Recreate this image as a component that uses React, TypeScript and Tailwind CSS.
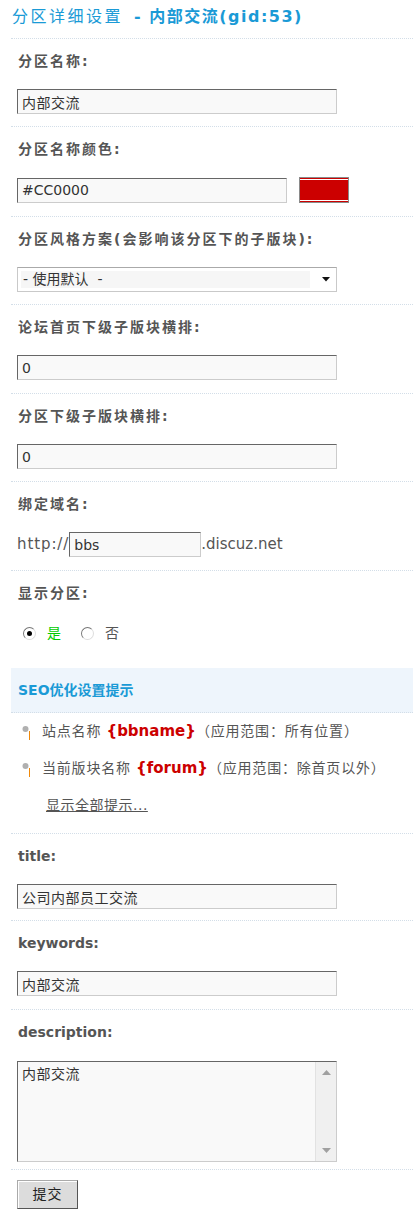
import React from "react";

const inputCls =
  "block h-[25px] border border-t-[#666] border-l-[#666] border-b-[#ccc] border-r-[#ccc] bg-[#f9f9f9] px-[4px] text-[14px] text-[#333] outline-none";

const Label = ({ children, latin = false }: { children: React.ReactNode; latin?: boolean }) => (
  <div
    className={`h-[44px] flex items-center pl-[7px] text-[14px] font-bold text-[#555] ${
      latin ? "tracking-normal" : "tracking-[2px]"
    }`}
  >
    {children}
  </div>
);

const Field = ({
  label,
  latin,
  children,
  bottom = "pb-[12px]",
  top = "mt-[6px]",
}: {
  label: React.ReactNode;
  latin?: boolean;
  children: React.ReactNode;
  bottom?: string;
  top?: string;
}) => (
  <div className={`border-t border-dotted border-[#d3dee8] ${bottom}`}>
    <Label latin={latin}>{label}</Label>
    <div className={`${top} pl-[6px]`}>{children}</div>
  </div>
);

const Radio = ({ checked }: { checked?: boolean }) => (
  <span className="w-[13px] h-[13px] rounded-full border border-t-[#777] border-l-[#777] border-b-[#ddd] border-r-[#ddd] bg-white flex items-center justify-center">
    {checked && <span className="w-[5px] h-[5px] rounded-full bg-black" />}
  </span>
);

const Bullet = () => (
  <svg width="10" height="20" viewBox="0 0 10 20" className="shrink-0">
    <circle cx="3.5" cy="7" r="3" fill="#b0b0b0" />
    <line x1="7.5" y1="9" x2="7.5" y2="18" stroke="#f0890a" strokeWidth="1" />
  </svg>
);

export default function App() {
  return (
    <div className="w-[413px] min-h-[1211px] bg-white pl-[11px] font-['DejaVu_Sans','Noto_Sans_CJK_SC',sans-serif] text-[#555]">
      {/* header */}
      <div className="h-[38px] flex items-center pb-[4px] pl-[1px] text-[16px] text-[#1a9ad6]">
        <span className="tracking-[2.5px]">分区详细设置</span>
        <span className="ml-[11px] font-bold tracking-[1.5px]">- 内部交流(gid:53)</span>
      </div>

      <Field label="分区名称:">
        <input readOnly defaultValue="内部交流" className={`${inputCls} w-[320px] tracking-[0.5px]`} />
      </Field>

      <Field label="分区名称颜色:" bottom="pb-[13px]">
        <div className="flex items-center gap-[12px]">
          <input readOnly defaultValue="#CC0000" className={`${inputCls} w-[270px]`} />
          <div className="w-[50px] h-[26px] border border-[#8a8a8a] bg-[#cc0000] py-[1px]">
            <div className="h-full border-y border-white" />
          </div>
        </div>
      </Field>

      <Field label="分区风格方案(会影响该分区下的子版块):">
        <div className="w-[320px] h-[25px] border border-[#c9c9c9] border-t-[#aaa] bg-white flex items-center pl-[3px] pr-[6px]">
          <div className="flex-1 h-[17px] bg-[#f6f6f6] flex items-center pl-[2px] text-[14px] text-[#333] mr-[12px]">
            - 使用默认 &nbsp;-
          </div>
          <svg width="8" height="5" viewBox="0 0 8 5">
            <polygon points="0,0 8,0 4,4.5" fill="#111" />
          </svg>
        </div>
      </Field>

      <Field label="论坛首页下级子版块横排:" bottom="pb-[13px]">
        <input readOnly defaultValue="0" className={`${inputCls} w-[320px]`} />
      </Field>

      <Field label="分区下级子版块横排:">
        <input readOnly defaultValue="0" className={`${inputCls} w-[320px]`} />
      </Field>

      <Field label="绑定域名:" bottom="pb-[13px]">
        <div className="flex items-center text-[15px] text-[#555]">
          <span className="tracking-[0.9px]">http://</span>
          <input readOnly defaultValue="bbs" className={`${inputCls} w-[132px]`} />
          <span>.discuz.net</span>
        </div>
      </Field>

      <Field label="显示分区:" bottom="pb-[22px]">
        <div className="h-[25px] flex items-center pl-[6px] text-[14px]">
          <Radio checked />
          <span className="ml-[11px] text-[#00cc00]">是</span>
          <span className="ml-[20px]">
            <Radio />
          </span>
          <span className="ml-[11px] text-[#555]">否</span>
        </div>
      </Field>

      {/* SEO tips */}
      <div className="h-[45px] bg-[#eef5fc] border-b border-dotted border-[#d3dee8] flex items-center pl-[7px] text-[14px] font-bold text-[#1a9ad6]">
        SEO优化设置提示
      </div>
      <div className="pb-[10px] text-[14px] text-[#555] tracking-[0.8px]">
        <div className="h-[37px] flex items-center pl-[11px] gap-[10px]">
          <Bullet />
          <span>
            站点名称 <b className="text-[15px] text-[#cc0000] tracking-normal">{"{bbname}"}</b>（应用范围：所有位置）
          </span>
        </div>
        <div className="h-[37px] flex items-center pl-[11px] gap-[10px]">
          <Bullet />
          <span>
            当前版块名称 <b className="text-[15px] text-[#cc0000] tracking-normal">{"{forum}"}</b>（应用范围：除首页以外）
          </span>
        </div>
        <div className="h-[36px] flex items-center pl-[35px]">
          <a href="#" className="underline text-[#555] tracking-[0.5px]">
            显示全部提示...
          </a>
        </div>
      </div>

      <Field label="title:" latin bottom="pb-[11px]">
        <input readOnly defaultValue="公司内部员工交流" className={`${inputCls} w-[320px] tracking-[0.5px]`} />
      </Field>

      <Field label="keywords:" latin bottom="pb-[13px]">
        <input readOnly defaultValue="内部交流" className={`${inputCls} w-[320px] tracking-[0.5px]`} />
      </Field>

      <Field label="description:" latin top="mt-[7px]" bottom="pb-[7px]">
        <div className="w-[320px] h-[101px] border border-t-[#666] border-l-[#666] border-b-[#ccc] border-r-[#ccc] bg-[#f9f9f9] flex">
          <div className="flex-1 pl-[4px] pt-[2px] text-[14px] text-[#333] tracking-[0.5px]">内部交流</div>
          <div className="w-[21px] bg-[#f0f0f0] border-l border-[#e2e2e2] flex flex-col justify-between items-center py-[8px]">
            <svg width="9" height="5" viewBox="0 0 9 5">
              <polygon points="0,5 9,5 4.5,0" fill="#a0a0a0" />
            </svg>
            <svg width="9" height="5" viewBox="0 0 9 5">
              <polygon points="0,0 9,0 4.5,5" fill="#a0a0a0" />
            </svg>
          </div>
        </div>
      </Field>

      <div className="border-t border-dotted border-[#d3dee8] pt-[10px] pl-[6px]">
        <button className="w-[61px] h-[29px] bg-[#dcdcdc] border border-t-[#aaa] border-l-[#aaa] border-b-[#555] border-r-[#555] shadow-[inset_1px_1px_0_#fff] text-[14px] text-[#222] tracking-[1px]">
          提交
        </button>
      </div>
    </div>
  );
}
